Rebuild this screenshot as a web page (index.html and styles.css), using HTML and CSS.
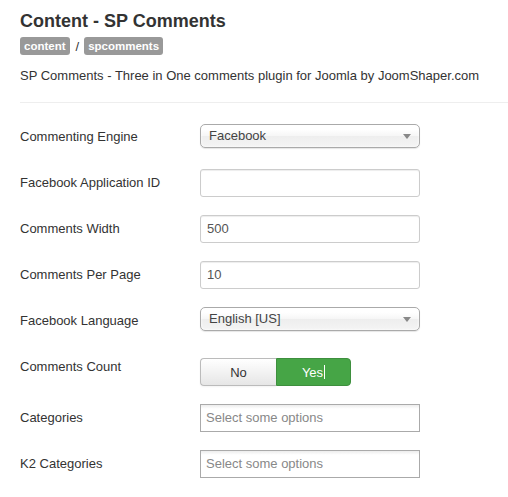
FILE: index.html
```html
<!DOCTYPE html>
<html>
<head>
<meta charset="utf-8">
<link rel="stylesheet" href="styles.css">
</head>
<body>
<div class="page">
  <h2 class="title">Content - SP Comments</h2>
  <div class="badges"><span class="badge">content</span><span class="sep">/</span><span class="badge">spcomments</span></div>
  <p class="desc">SP Comments - Three in One comments plugin for Joomla by JoomShaper.com</p>
  <hr class="rule">
  <div class="form">
    <div class="row row-select">
      <label class="lbl">Commenting Engine</label>
      <div class="select"><span>Facebook</span><i class="arrow"></i></div>
    </div>
    <div class="row">
      <label class="lbl">Facebook Application ID</label>
      <div class="input"></div>
    </div>
    <div class="row">
      <label class="lbl">Comments Width</label>
      <div class="input">500</div>
    </div>
    <div class="row">
      <label class="lbl">Comments Per Page</label>
      <div class="input">10</div>
    </div>
    <div class="row row-select">
      <label class="lbl">Facebook Language</label>
      <div class="select lang"><span>English [US]</span><i class="arrow"></i></div>
    </div>
    <div class="row row-toggle">
      <label class="lbl">Comments Count</label>
      <div class="toggle"><span class="btn no">No</span><span class="btn yes">Yes<i class="caret"></i></span></div>
    </div>
    <div class="row">
      <label class="lbl">Categories</label>
      <div class="multi">Select some options</div>
    </div>
    <div class="row">
      <label class="lbl">K2 Categories</label>
      <div class="multi">Select some options</div>
    </div>
  </div>
</div>
</body>
</html>
```

FILE: styles.css
```css
html, body { margin: 0; padding: 0; background: #fff; }
body { font-family: "Liberation Sans", Arial, sans-serif; font-size: 13px; color: #333; }
.page { padding: 10px 0 0 20px; }
.title { margin: 0; font-size: 18px; line-height: 22px; font-weight: bold; color: #333; }
.badges { margin-top: 5px; height: 18px; display: flex; align-items: center; }
.badge { display: inline-block; background: #999; color: #fff; font-size: 11.5px; font-weight: bold; line-height: 18px; padding: 0 4px; border-radius: 3px; height: 18px; }
.sep { margin: 0 5px 0 6px; font-size: 13px; color: #333; }
.desc { margin: 12px 0 0; line-height: 18px; }
.rule { margin: 17px 0 0; border: 0; border-top: 1px solid #eee; border-bottom: 1px solid #fff; height: 0; }
.form { margin-top: 19px; }
.row { display: flex; align-items: flex-start; margin-bottom: 18px; min-height: 28px; }
.lbl { width: 180px; flex: none; padding-top: 5px; line-height: 18px; }
.input { box-sizing: border-box; width: 220px; height: 28px; border: 1px solid #ccc; border-radius: 3px; padding: 4px 6px; line-height: 18px; color: #555; box-shadow: inset 0 1px 1px rgba(0,0,0,0.075); }
.select { position: relative; box-sizing: border-box; width: 220px; height: 24px; margin-top: 1px; border: 1px solid #aaa; border-radius: 5px; background: linear-gradient(#fff 20%, #f6f6f6 50%, #eee 52%, #f4f4f4 100%); box-shadow: 0 0 3px #fff inset, 0 1px 1px rgba(0,0,0,0.1); padding: 0 0 0 8px; line-height: 22px; color: #444; }
.lang { margin-top: 0; }
.arrow { position: absolute; right: 8px; top: 9px; width: 0; height: 0; border-left: 4px solid transparent; border-right: 4px solid transparent; border-top: 5px solid #888; }
.row-toggle .toggle { margin-top: 5px; }
.toggle { display: flex; height: 28px; }
.btn { box-sizing: border-box; height: 28px; width: 76px; display: flex; align-items: center; justify-content: center; font-size: 13px; }
.no { border: 1px solid #bbb; border-right: 0; border-radius: 4px 0 0 4px; background: linear-gradient(#fff, #e6e6e6); color: #333; box-shadow: 0 1px 2px rgba(0,0,0,0.05); }
.yes { width: 75px; border: 1px solid #3e8f3e; border-radius: 0 4px 4px 0; background: #46a546; color: #fff; position: relative; }
.caret { display: inline-block; width: 1px; height: 14px; background: #fff; margin-left: 1px; }
.multi { box-sizing: border-box; width: 220px; height: 28px; border: 1px solid #aaa; background: linear-gradient(#eee 1%, #fff 15%); padding: 0 5px; line-height: 26px; color: #888; }
```
